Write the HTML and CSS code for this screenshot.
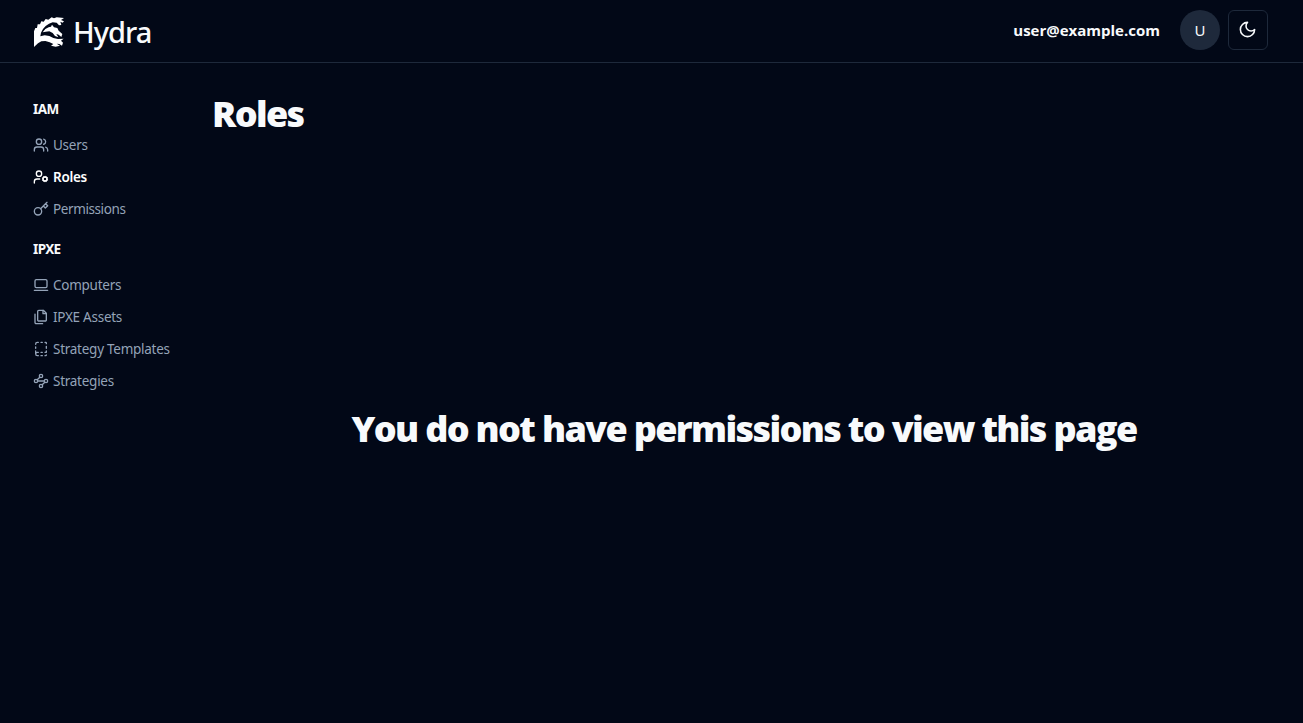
FILE: index.html
```html
<!DOCTYPE html>
<html lang="en">
<head>
<meta charset="utf-8">
<title>Hydra</title>
<link rel="stylesheet" href="styles.css">
</head>
<body>
<header class="header">
  <div class="brand">
    <svg class="logo" viewBox="9 12 96 96">
      <path d="M12 105V58L16 48 21 48 23 37 30 37 34 28 41 29 47 21 55 23 65 16 72 19 80 16 102 18 93 24 102 28 98 32 91 29 94 39 87 40 80 32 68 31 57 35 47 42 39 51 33 62 31 73 44 70 58 72 70 78 84 81 101 80 93 86 99 92 96 101 88 96 80 95 90 101 77 104 63 101 70 96 59 91 46 87 34 88 24 94Z"/>
      <path d="M38 61 46 51 56 46 63 44 66 38 72 46 82 48 86 56 97 66 94 75 86 68 79 66 85 76 75 72 68 63 58 58 47 59Z"/>
    </svg>
    <span class="brand-name">Hydra</span>
  </div>
  <div class="account">
    <span class="email">user@example.com</span>
    <span class="avatar">U</span>
    <button class="theme" aria-label="Toggle theme"><svg class="icon moon" viewBox="0 0 24 24"><path d="M12 3a6 6 0 0 0 9 9 9 9 0 1 1-9-9Z"/></svg></button>
  </div>
</header>
<div class="body">
  <nav class="sidebar">
    <h4 class="group">IAM</h4>
    <a class="link"><svg class="icon" viewBox="0 0 24 24"><path d="M16 21v-2a4 4 0 0 0-4-4H6a4 4 0 0 0-4 4v2"/><circle cx="9" cy="7" r="4"/><path d="M22 21v-2a4 4 0 0 0-3-3.870M16 3.130a4 4 0 0 1 0 7.750"/></svg><span>Users</span></a>
    <a class="link active"><svg class="icon" viewBox="0 0 24 24"><circle cx="18" cy="15" r="3"/><circle cx="9" cy="7" r="4"/><path d="M10 15H6a4 4 0 0 0-4 4v2M21.700 16.400l-.9-.3M15.200 13.900l-.9-.3M16.600 18.700l.3-.9M19.100 12.200l.3-.9M19.600 18.700l-.4-1M16.800 12.300l-.4-1M14.300 16.600l1-.4M20.700 13.800l1-.4"/></svg><span>Roles</span></a>
    <a class="link tight"><svg class="icon" viewBox="0 0 24 24"><circle cx="7.500" cy="15.500" r="5.500"/><path d="m21 2-9.600 9.600M15.500 7.500l3 3L22 7l-3-3"/></svg><span>Permissions</span></a>
    <h4 class="group second">IPXE</h4>
    <a class="link"><svg class="icon" viewBox="0 0 24 24"><rect width="18" height="12" x="3" y="4" rx="2"/><path d="M2 20h20"/></svg><span>Computers</span></a>
    <a class="link"><svg class="icon" viewBox="0 0 24 24"><path d="M15.500 2H8.600c-.4 0-.8.2-1.100.5-.3.3-.5.7-.5 1.100v12.800c0 .4.2.8.5 1.100.3.3.7.5 1.100.5h9.800c.4 0 .8-.2 1.100-.5.3-.3.5-.7.5-1.100V6.500L15.500 2z"/><path d="M3 7.600v12.800c0 .4.2.8.5 1.100.3.3.7.5 1.100.5h9.800M15 2v5h5"/></svg><span>IPXE Assets</span></a>
    <a class="link"><svg class="icon" viewBox="0 0 24 24"><path d="M12 17h2M12 22h2M12 2h2M18 22h1a1 1 0 0 0 1-1M18 2h1a1 1 0 0 1 1 1v1M20 15v2h-2M20 8v3M4 11V9M4 19.500V15M4 5v-.5A2.500 2.500 0 0 1 6.500 2H8M8 22H6.500a1 1 0 0 1 0-5H8"/></svg><span>Strategy Templates</span></a>
    <a class="link"><svg class="icon" viewBox="0 0 24 24"><circle cx="12" cy="4.500" r="2.500"/><path d="m10.200 6.300-3.900 3.900"/><circle cx="4.500" cy="12" r="2.500"/><path d="M7 12h10"/><circle cx="19.500" cy="12" r="2.500"/><path d="m13.800 17.700 3.900-3.900"/><circle cx="12" cy="19.500" r="2.500"/></svg><span>Strategies</span></a>
  </nav>
  <main class="main">
    <h1 class="title">Roles</h1>
    <div class="denied"><h1 class="message">You do not have permissions to view this page</h1></div>
  </main>
</div>
</body>
</html>
```
FILE: styles.css
```css
* { box-sizing: border-box; }
body { margin: 0; background: #020817; color: #f8fafc; font-family: "Noto Sans", "Open Sans", sans-serif; height: 723px; overflow: hidden; }
h1, h4 { margin: 0; white-space: nowrap; }
.header { height: 63px; border-bottom: 1px solid #1e293b; display: flex; justify-content: space-between; padding: 0 35px 2px 33px; align-items: center; }
.brand { display: flex; align-items: center; gap: 8px; padding-top: 3px; }
.logo { width: 32px; height: 32px; fill: #fff; }
.brand-name { font-size: 29px; font-weight: 500; letter-spacing: -1px; line-height: 36px; }
.account { display: flex; align-items: center; }
.email { font-family: "Open Sans", sans-serif; font-size: 15px; font-weight: 700; margin-right: 20px; }
.avatar { width: 40px; height: 40px; border-radius: 50%; background: #1e293b; display: flex; align-items: center; justify-content: center; font-size: 15px; margin-right: 8px; }
.theme { width: 40px; height: 40px; border: 1px solid #1e293b; border-radius: 6px; background: #020817; color: #f8fafc; padding: 0 2px 2px 0; display: flex; align-items: center; justify-content: center; }
.icon { width: 16px; height: 16px; fill: none; stroke: currentColor; stroke-width: 2; stroke-linecap: round; stroke-linejoin: round; flex: none; }
.moon { width: 19px; height: 19px; }
.body { display: flex; height: 660px; }
.sidebar { width: 212px; flex: none; padding: 36px 0 0 33px; }
.group { font-size: 13.500px; line-height: 20px; font-weight: 700; margin-bottom: 10px; letter-spacing: -0.6px; }
.second { margin-top: 14px; }
.link { display: flex; align-items: center; gap: 4px; height: 32px; color: #94a3b8; font-size: 13.500px; letter-spacing: -0.260px; white-space: nowrap; }
.tight { letter-spacing: -0.4px; }
.active { color: #fff; font-weight: 600; letter-spacing: -0.3px; }
.main { flex: 1; display: flex; flex-direction: column; padding: 31px 27px 0 0; }
.title, .message { font-family: "Open Sans", sans-serif; font-size: 36px; line-height: 40px; font-weight: 800; letter-spacing: -1.660px; }
.denied { flex: 1; display: flex; align-items: center; justify-content: center; }
```
